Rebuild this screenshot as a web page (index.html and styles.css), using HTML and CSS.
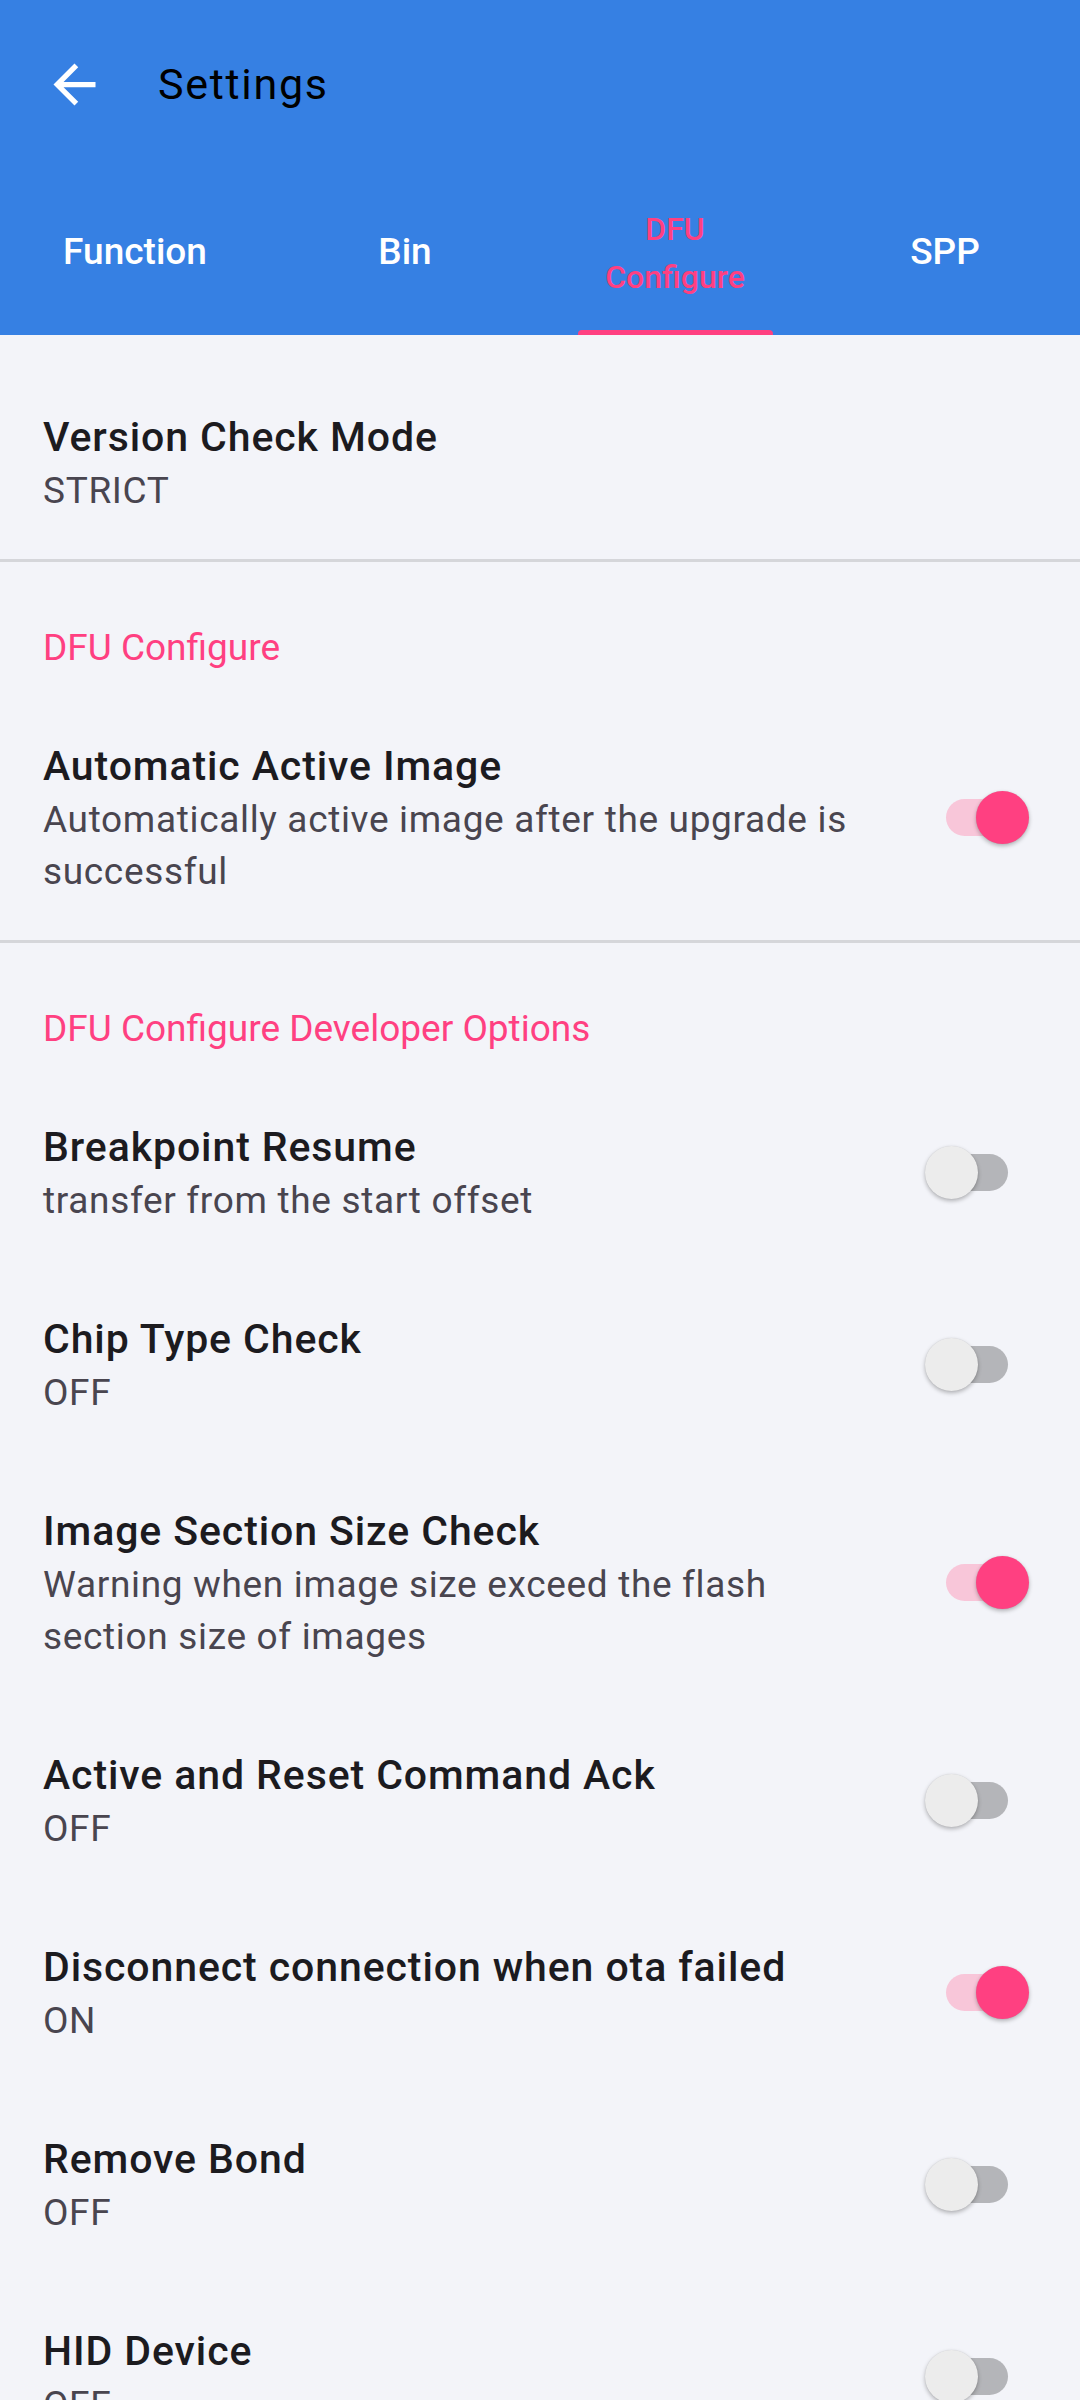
FILE: index.html
```html
<!DOCTYPE html>
<html lang="en">
<head>
<meta charset="utf-8">
<title>Settings</title>
<link rel="stylesheet" href="styles.css">
</head>
<body>
<div class="screen">
  <header class="appbar">
    <div class="toolbar">
      <svg class="back" viewBox="0 0 24 24" width="63" height="63" aria-hidden="true">
        <path d="M20 11H7.83l5.59-5.59L12 4l-8 8 8 8 1.41-1.41L7.83 13H20v-2z" fill="#ffffff"/>
      </svg>
      <div class="title">Settings</div>
    </div>
    <nav class="tabs">
      <div class="tab">Function</div>
      <div class="tab">Bin</div>
      <div class="tab active two-line"><span>DFU<br>Configure</span><i class="indicator"></i></div>
      <div class="tab">SPP</div>
    </nav>
  </header>

  <main class="list">
    <div class="item">
      <div class="text">
        <div class="ititle">Version Check Mode</div>
        <div class="summary">STRICT</div>
      </div>
    </div>
    <div class="divider"></div>

    <div class="category">DFU Configure</div>
    <div class="item">
      <div class="text">
        <div class="ititle">Automatic Active Image</div>
        <div class="summary">Automatically active image after the upgrade is successful</div>
      </div>
      <div class="switch on"><span class="track"></span><span class="thumb"></span></div>
    </div>
    <div class="divider"></div>

    <div class="category">DFU Configure Developer Options</div>
    <div class="item">
      <div class="text">
        <div class="ititle">Breakpoint Resume</div>
        <div class="summary">transfer from the start offset</div>
      </div>
      <div class="switch"><span class="track"></span><span class="thumb"></span></div>
    </div>
    <div class="item">
      <div class="text">
        <div class="ititle">Chip Type Check</div>
        <div class="summary">OFF</div>
      </div>
      <div class="switch"><span class="track"></span><span class="thumb"></span></div>
    </div>
    <div class="item">
      <div class="text">
        <div class="ititle">Image Section Size Check</div>
        <div class="summary">Warning when image size exceed the flash section size of images</div>
      </div>
      <div class="switch on"><span class="track"></span><span class="thumb"></span></div>
    </div>
    <div class="item">
      <div class="text">
        <div class="ititle">Active and Reset Command Ack</div>
        <div class="summary">OFF</div>
      </div>
      <div class="switch"><span class="track"></span><span class="thumb"></span></div>
    </div>
    <div class="item">
      <div class="text">
        <div class="ititle">Disconnect connection when ota failed</div>
        <div class="summary">ON</div>
      </div>
      <div class="switch on"><span class="track"></span><span class="thumb"></span></div>
    </div>
    <div class="item">
      <div class="text">
        <div class="ititle">Remove Bond</div>
        <div class="summary">OFF</div>
      </div>
      <div class="switch"><span class="track"></span><span class="thumb"></span></div>
    </div>
    <div class="item">
      <div class="text">
        <div class="ititle">HID Device</div>
        <div class="summary">OFF</div>
      </div>
      <div class="switch"><span class="track"></span><span class="thumb"></span></div>
    </div>
  </main>
</div>
</body>
</html>
```
FILE: styles.css
```css
html, body {
  margin: 0;
  padding: 0;
}
body {
  width: 1080px;
  height: 2400px;
  overflow: hidden;
  background: #f3f4f9;
  font-family: Roboto, "Noto Sans", "Liberation Sans", sans-serif;
}
.screen {
  width: 1080px;
  height: 2400px;
  overflow: hidden;
}
.appbar {
  background: #3680e3;
}
.toolbar {
  height: 168px;
  display: flex;
  align-items: center;
  padding-left: 43px;
  box-sizing: border-box;
}
.back {
  display: block;
  flex: none;
}
.title {
  margin-left: 52px;
  font-size: 43px;
  letter-spacing: 0.04em;
  color: #000000;
  font-weight: 400;
}
.tabs {
  height: 167px;
  display: grid;
  grid-template-columns: repeat(4, 1fr);
}
.tab {
  position: relative;
  display: flex;
  align-items: center;
  justify-content: center;
  text-align: center;
  font-size: 37px;
  font-weight: 500;
  line-height: 48px;
  color: #ffffff;
}
.tab.two-line {
  font-size: 32px;
  line-height: 48px;
  padding-top: 2px;
}
.tab.active {
  color: #ff4081;
}
.indicator {
  position: absolute;
  left: 50%;
  bottom: 0;
  width: 195px;
  height: 5px;
  margin-left: -97px;
  background: #ff4081;
  border-radius: 4px 4px 0 0;
}
.list {
  padding-top: 32px;
}
.item {
  display: flex;
  align-items: center;
  padding: 42px 51px 42px 43px;
}
.text {
  flex: 1;
  min-width: 0;
}
.ititle {
  font-size: 41px;
  font-weight: 500;
  letter-spacing: 0.022em;
  line-height: 56px;
  color: #1c1b1f;
}
.summary {
  font-size: 37px;
  font-weight: 400;
  letter-spacing: 0.018em;
  line-height: 52px;
  color: #49454f;
}
.divider {
  height: 3px;
  background: #d5d6da;
}
.category {
  padding: 62px 43px 24px;
  font-size: 37px;
  line-height: 48px;
  letter-spacing: 0;
  color: #ff4081;
}
.switch {
  position: relative;
  flex: none;
  width: 104px;
  height: 54px;
  margin-left: 55px;
}
.track {
  position: absolute;
  left: 21px;
  top: 8px;
  width: 62px;
  height: 37px;
  border-radius: 19px;
  background: #b4b5b9;
}
.thumb {
  position: absolute;
  left: 0;
  top: 0;
  width: 53px;
  height: 53px;
  border-radius: 50%;
  background: #ececec;
  box-shadow: 0 2px 4px rgba(0, 0, 0, 0.28), 0 0 1px rgba(0, 0, 0, 0.12);
}
.switch.on .track {
  background: #f8c6d9;
}
.switch.on .thumb {
  left: 51px;
  background: #ff4081;
}
```
